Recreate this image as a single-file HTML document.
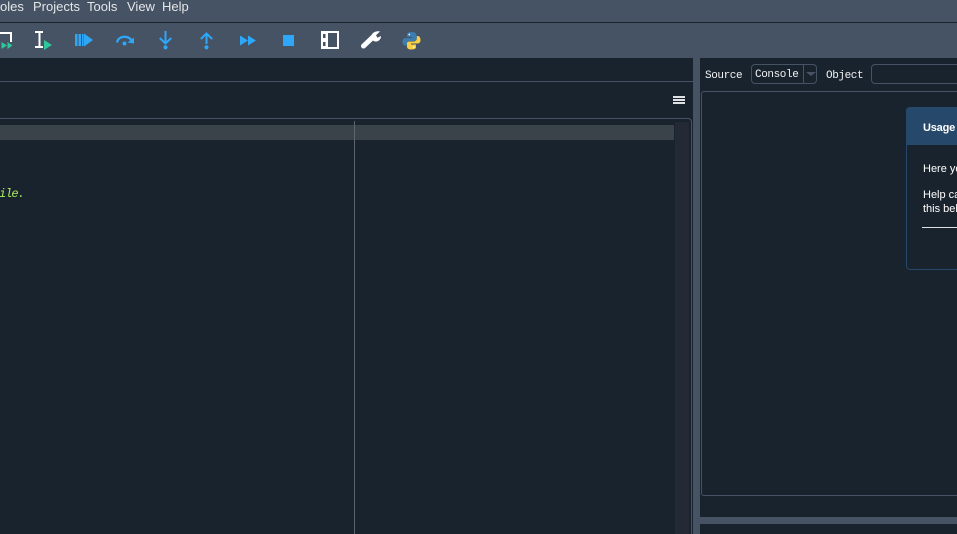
<!DOCTYPE html>
<html><head><meta charset="utf-8">
<style>
html,body{margin:0;padding:0;background:#19232D;width:957px;height:534px;overflow:hidden;}
#r{position:relative;width:957px;height:534px;overflow:hidden;background:#19232D;}
.a{position:absolute;}
.t{position:absolute;white-space:nowrap;}
.m{font:13px/15px 'Liberation Sans',sans-serif;color:#E4E6E8;top:-1px;}
.c{font:11px/14px 'Liberation Mono',monospace;color:#F0F1F2;letter-spacing:-.4px;}
.u{font:11px/14px 'Liberation Sans',sans-serif;color:#fff;}
</style></head><body><div id="r">
<!-- menu + toolbar -->
<div class="a" style="left:0;top:0;width:957px;height:58px;background:#455364"></div>
<div class="a" style="left:0;top:22px;width:957px;height:1px;background:#19232D"></div>
<div class="t m" style="left:0">oles</div>
<div class="t m" style="left:33px">Projects</div>
<div class="t m" style="left:87px">Tools</div>
<div class="t m" style="left:127px">View</div>
<div class="t m" style="left:162px">Help</div>
<svg class="a" style="left:0;top:0" width="440" height="58" viewBox="0 0 440 58">
<!-- run cell partial -->
<path d="M0 33H11V42" fill="none" stroke="#fff" stroke-width="2"/>
<path d="M1.500 42L7 45.500L1.500 49ZM7.500 42L12.500 45.500L7.500 49Z" fill="#2FC89A"/>
<!-- run selection -->
<path d="M35 32H43M35 47H43M39.500 32V47" stroke="#fff" stroke-width="2" fill="none"/>
<path d="M44 40L52 45L44 50Z" fill="#2FC89A"/>
<!-- debug -->
<path d="M75 34H77.500V46H75ZM78.500 34H81V46H78.500ZM82 34H83.500V46H82Z" fill="#2EA7F8"/>
<path d="M84 33.500L93 40L84 46.500Z" fill="#2EA7F8"/>
<!-- step over -->
<path d="M117 42.500C118.500 35.500 128 34.500 132.500 41.500" fill="none" stroke="#2EA7F8" stroke-width="2.200"/>
<path d="M127.500 42.500L134 37.500V43.500Z" fill="#2EA7F8"/>
<circle cx="124.500" cy="43.500" r="2" fill="#2EA7F8"/>
<!-- step in -->
<path d="M165.500 31V43.500M159.800 38L165.500 43.500L171.200 38" fill="none" stroke="#2EA7F8" stroke-width="2"/>
<circle cx="165.500" cy="47.300" r="2.100" fill="#2EA7F8"/>
<!-- step out -->
<path d="M206.500 33.500V44M200.800 39L206.500 33.500L212.200 39" fill="none" stroke="#2EA7F8" stroke-width="2"/>
<circle cx="206.500" cy="47.300" r="2.100" fill="#2EA7F8"/>
<!-- continue -->
<path d="M240 35.500L248 40.500L240 45.500ZM248 35.500L256 40.500L248 45.500Z" fill="#2EA7F8"/>
<!-- stop -->
<rect x="283" y="35" width="11" height="11" fill="#2EA7F8"/>
<!-- panes -->
<path fill-rule="evenodd" d="M321 31H339V49H321ZM323 34V38H325.500V34ZM323 42V46H325.500V42ZM328 33V47H337V33Z" fill="#fff"/>
<!-- wrench -->
<path d="M363.500 46L373.500 36.500" stroke="#fff" stroke-width="5" stroke-linecap="round"/>
<path d="M371.500 37C371 33.500 375 30.500 380 31.500L376 35.200L377.500 37.800L381 36C381 41 376 42.500 373.500 41Z" fill="#fff"/>
<!-- python -->
<path d="M411.500 32C407.500 32 407 33.500 407 35V37H412V38H405.500C403.500 38 402.500 39.500 402.500 41.500C402.500 44 403.500 45.500 405.500 45.500H407V43.500C407 41.500 408.500 41 410 41H414C415.500 41 416.500 40 416.500 38.500V35C416.500 33 414.500 32 411.500 32Z" fill="#3F7CAE"/>
<circle cx="409.300" cy="34.500" r=".9" fill="#fff"/>
<path d="M411.500 49.500C415.500 49.500 416 48 416 46.500V44.500H411V43.500H417.500C419.500 43.500 420.500 42 420.500 40C420.500 37.500 419.500 36 417.500 36H416.800V38.500C416.800 40.500 415 41.500 413.500 41.500H409.500C408 41.500 407 42 407 43.500V46.500C407 48.500 408.500 49.500 411.500 49.500Z" fill="#F7CE45"/>
<circle cx="413.700" cy="47" r=".9" fill="#fff"/>
</svg>
<!-- left pane -->
<div class="a" style="left:0;top:81px;width:693px;height:1px;background:#455364"></div>
<div class="a" style="left:-6px;top:118px;width:696px;height:430px;border:1px solid #455364;border-radius:4px"></div>
<div class="a" style="left:0;top:125px;width:674px;height:15px;background:#3A4349"></div>
<div class="a" style="left:675px;top:122px;width:14px;height:412px;background:#232A35"></div>
<div class="a" style="left:354px;top:121px;width:1px;height:413px;background:#5A6570"></div>
<div class="a" style="left:673px;top:96px;width:12px;height:2px;background:#E0E1E3"></div>
<div class="a" style="left:673px;top:99px;width:12px;height:2px;background:#E0E1E3"></div>
<div class="a" style="left:673px;top:102px;width:12px;height:2px;background:#E0E1E3"></div>
<div class="t" style="left:-1px;top:187px;font:italic 12px/14px 'Liberation Mono',monospace;color:#A9EC62;letter-spacing:-1px">ile.</div>
<!-- splitters -->
<div class="a" style="left:693px;top:58px;width:7px;height:476px;background:#455364"></div>
<div class="a" style="left:700px;top:517px;width:257px;height:7px;background:#455364"></div>
<!-- right pane -->
<div class="t c" style="left:705px;top:69px">Source</div>
<div class="a" style="left:751px;top:64px;width:64px;height:18px;border:1px solid #455364;border-radius:4px"></div>
<div class="a" style="left:803px;top:65px;width:1px;height:18px;background:#455364"></div>
<div class="a" style="left:806px;top:72px;width:0;height:0;border-left:5px solid transparent;border-right:5px solid transparent;border-top:4px solid #455364"></div>
<div class="t c" style="left:755px;top:68px">Console</div>
<div class="t c" style="left:826px;top:69px">Object</div>
<div class="a" style="left:871px;top:64px;width:120px;height:18px;border:1px solid #455364;border-radius:4px"></div>
<div class="a" style="left:701px;top:91px;width:300px;height:403px;border:1px solid #455364;border-radius:3px"></div>
<!-- usage card -->
<div class="a" style="left:906px;top:107px;width:100px;height:161px;border:1px solid #26486B;border-radius:4px"></div>
<div class="a" style="left:906px;top:107px;width:102px;height:38px;background:#26486B;border-radius:4px 4px 0 0"></div>
<div class="t u" style="left:923px;top:121px;font-weight:bold;letter-spacing:-.2px">Usage</div>
<div class="t u" style="left:923px;top:162px">Here you</div>
<div class="t u" style="left:923px;top:188px">Help can</div>
<div class="t u" style="left:923px;top:202px">this below</div>
<div class="a" style="left:922px;top:227px;width:40px;height:1px;background:#E0E1E3"></div>
</div></body></html>
